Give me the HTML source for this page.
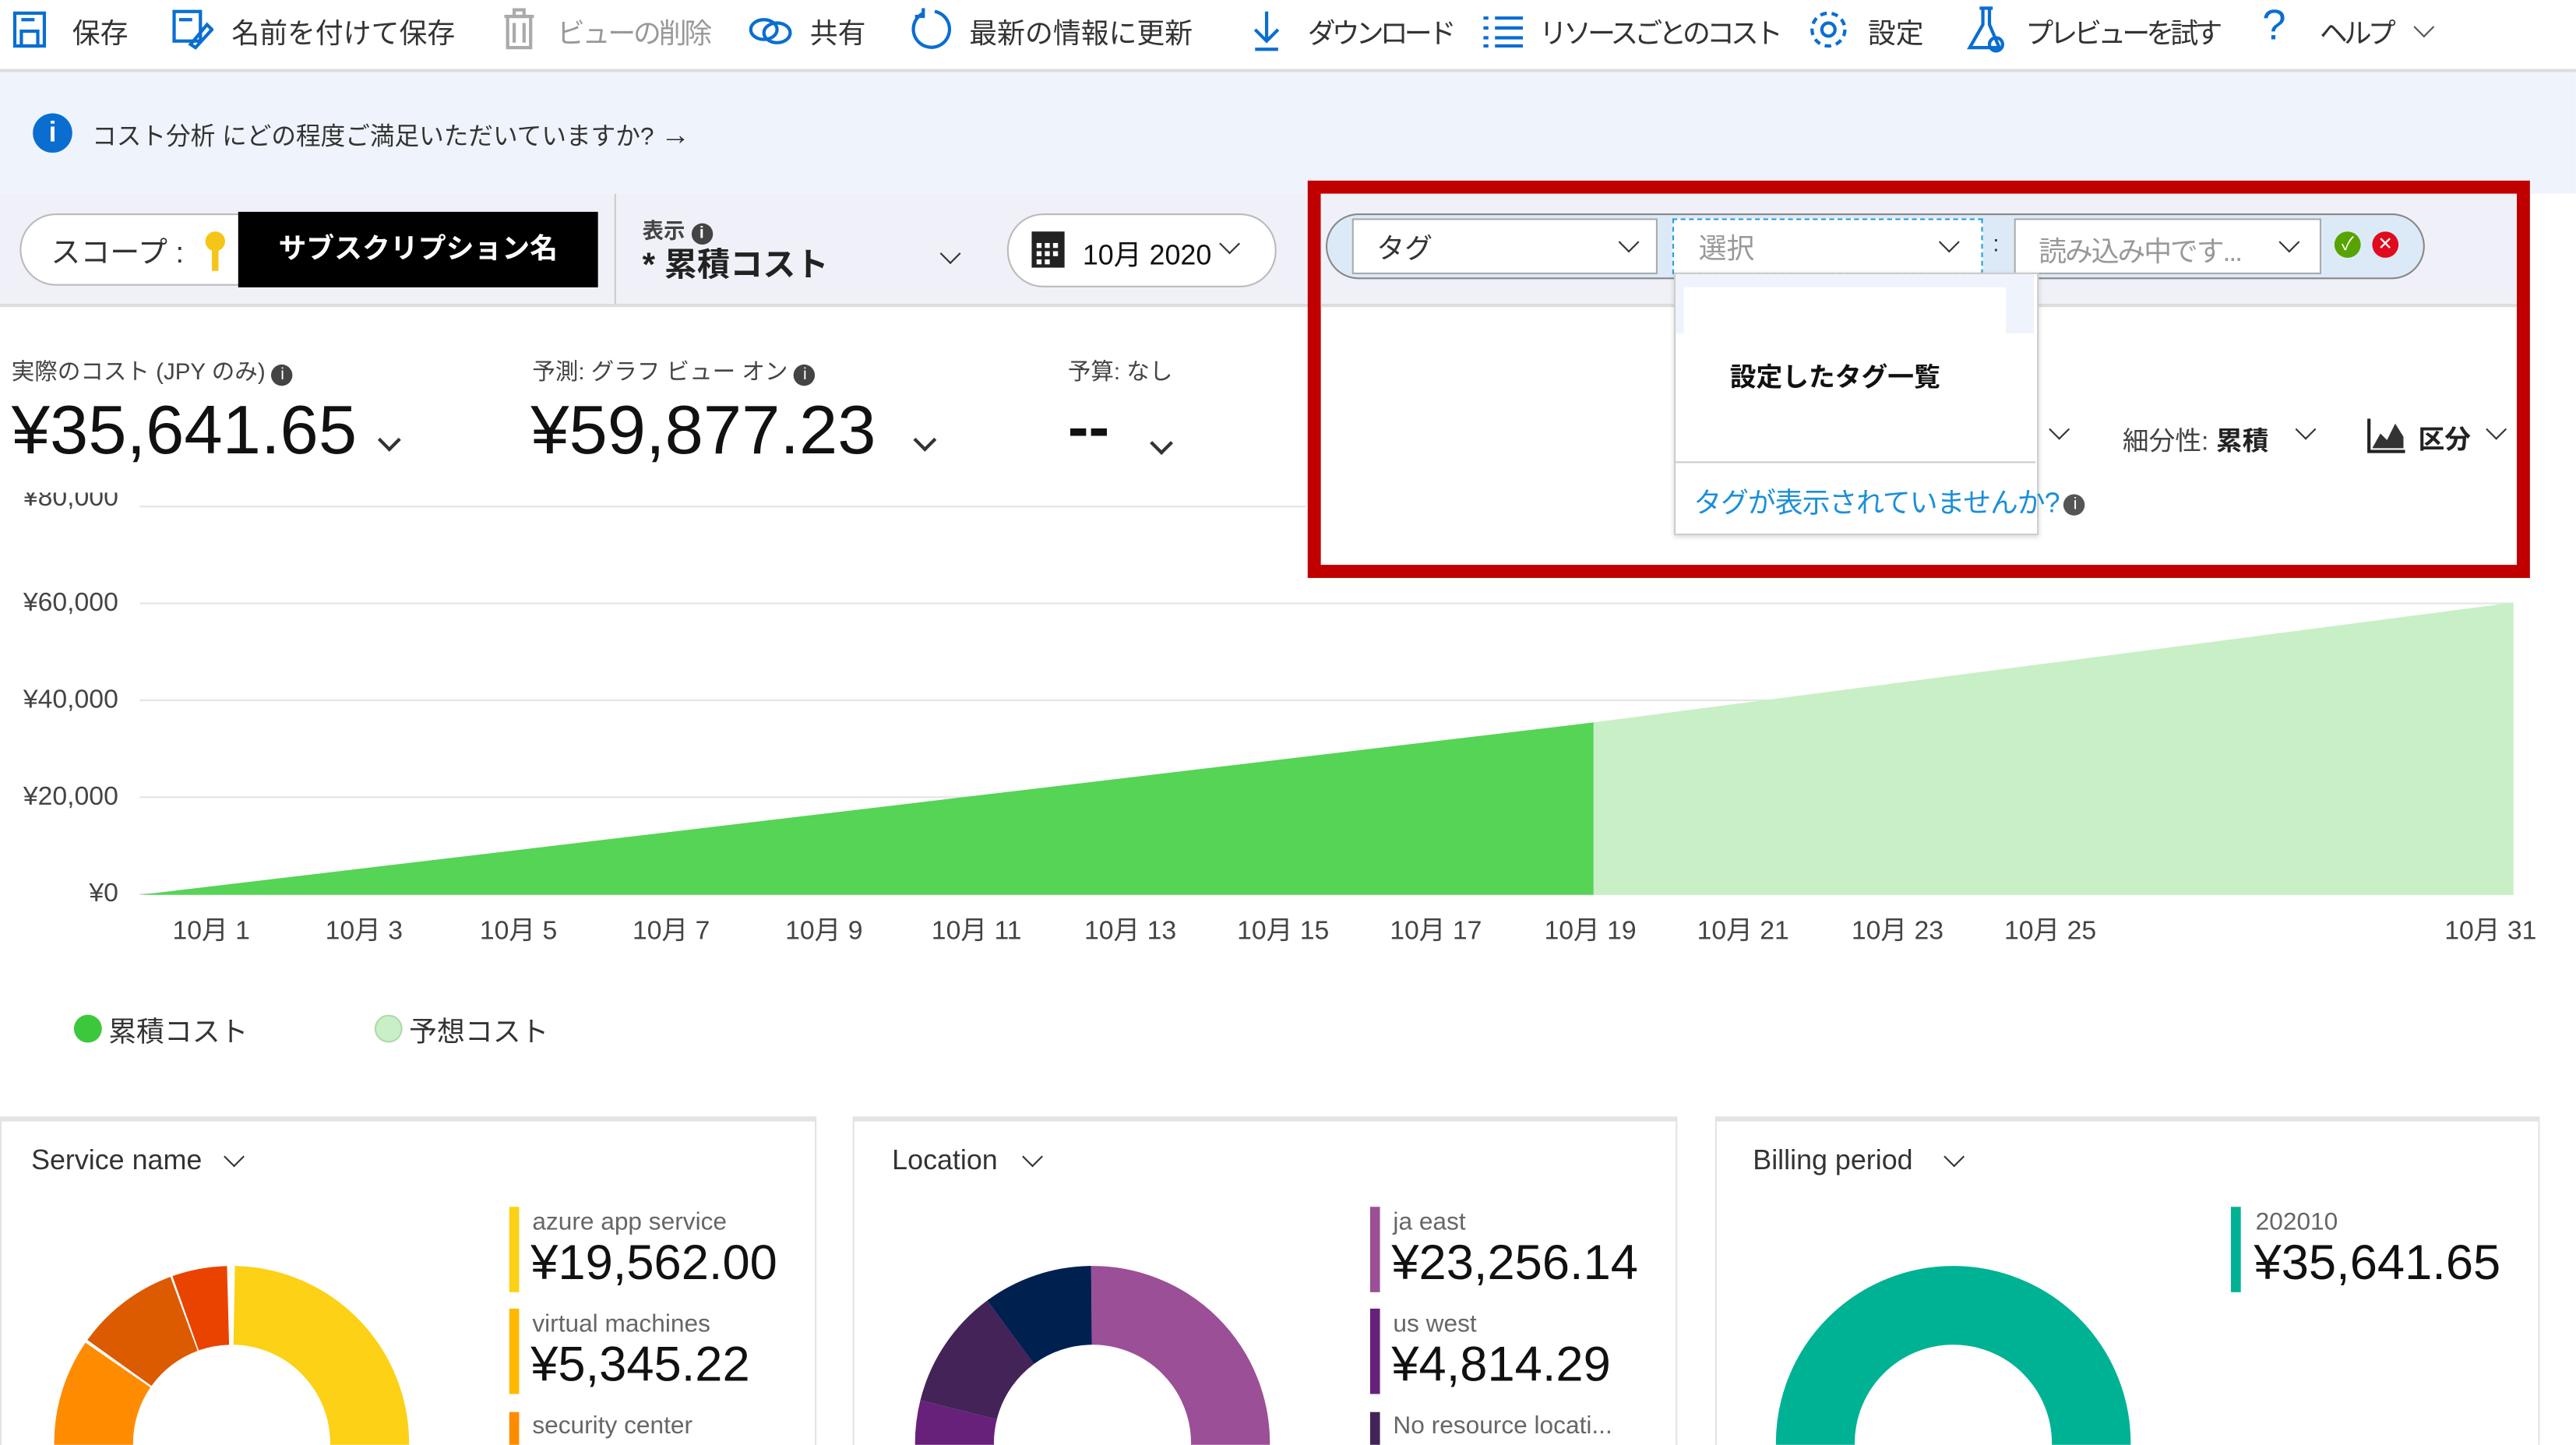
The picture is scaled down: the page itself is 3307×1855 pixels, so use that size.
<!DOCTYPE html>
<html><head><meta charset="utf-8">
<style>
html,body{margin:0;padding:0;background:#fff;overflow:hidden}
body{width:3307px;height:1855px;position:relative}
#w{position:absolute;left:0;top:0;width:1568px;height:880px;overflow:hidden;transform:scale(2.109,2.1078);transform-origin:0 0;font-family:"Liberation Sans","Noto Sans CJK JP",sans-serif;color:#222}
.a{position:absolute;white-space:nowrap}
.tb{font-size:17px;color:#333;top:6px}
.k{letter-spacing:-2.3px}
.chev{display:inline-block;width:8px;height:8px;border-right:2px solid #333;border-bottom:2px solid #333;transform:rotate(45deg)}
.yl{font-size:16px;color:#444;text-align:right;width:70px;left:2px}
.xl{font-size:16px;color:#444;top:553px}
.grid{position:absolute;left:85px;width:1445px;height:1px;background:#e4e4e4}
.card{position:absolute;top:680px;height:220px;border:1px solid #e3e3e3;border-top:3px solid #e3e3e3;background:#fff}
.lbl{font-size:15px;color:#666}
.val{font-size:30px;color:#111}
.bar{position:absolute;width:6px}
</style></head><body><div id="w">
<div class="a" style="left:0;top:0;width:1568px;height:42px;background:#fff;border-bottom:2px solid #ddd"></div>
<svg class="a" style="left:7px;top:6px" width="24" height="24" viewBox="0 0 24 24" fill="none" stroke="#0a6ed1" stroke-width="2"><rect x="2" y="2" width="18" height="20"/><rect x="6" y="13" width="10" height="9"/><line x1="6" y1="6" x2="14" y2="6"/></svg>
<div class="a tb" style="left:44px">保存</div>
<svg class="a" style="left:104px;top:5px" width="26" height="26" viewBox="0 0 26 26" fill="none" stroke="#0a6ed1" stroke-width="2"><rect x="2" y="2" width="16" height="18"/><line x1="5" y1="7" x2="13" y2="7"/><path d="M12 22 L22 10 L25 13 L15 24 Z"/></svg>
<div class="a tb" style="left:141px">名前を付けて保存</div>
<svg class="a" style="left:305px;top:5px" width="22" height="26" viewBox="0 0 22 26" fill="none" stroke="#aaa" stroke-width="2"><line x1="2" y1="5" x2="20" y2="5"/><rect x="4" y="5" width="14" height="19"/><line x1="8" y1="9" x2="8" y2="21"/><line x1="14" y1="9" x2="14" y2="21"/><rect x="8" y="1" width="6" height="4"/></svg>
<div class="a tb k" style="left:339px;color:#999;letter-spacing:-1.5px">ビューの削除</div>
<svg class="a" style="left:455px;top:9px" width="28" height="20" viewBox="0 0 28 20" fill="none" stroke="#0a6ed1" stroke-width="2"><ellipse cx="10" cy="9" rx="8" ry="6"/><ellipse cx="18" cy="11" rx="8" ry="6"/></svg>
<div class="a tb" style="left:493px">共有</div>
<svg class="a" style="left:553px;top:4px" width="26" height="28" viewBox="0 0 26 28" fill="none" stroke="#0a6ed1" stroke-width="2"><path d="M9 4 A11 11 0 1 0 16 3"/><path d="M9 1 L9 6 L4 6"/></svg>
<div class="a tb" style="left:590px">最新の情報に更新</div>
<svg class="a" style="left:762px;top:6px" width="18" height="26" viewBox="0 0 18 26" fill="none" stroke="#0a6ed1" stroke-width="2"><line x1="9" y1="1" x2="9" y2="19"/><path d="M2 12 L9 19 L16 12"/><line x1="2" y1="24" x2="16" y2="24"/></svg>
<div class="a tb k" style="left:796px">ダウンロード</div>
<svg class="a" style="left:902px;top:9px" width="26" height="20" viewBox="0 0 26 20" stroke="#0a6ed1" stroke-width="2"><line x1="8" y1="2" x2="25" y2="2"/><line x1="8" y1="8" x2="25" y2="8"/><line x1="8" y1="14" x2="25" y2="14"/><line x1="8" y1="19" x2="25" y2="19"/><line x1="1" y1="2" x2="4" y2="2"/><line x1="1" y1="8" x2="4" y2="8"/><line x1="1" y1="14" x2="4" y2="14"/><line x1="1" y1="19" x2="4" y2="19"/></svg>
<div class="a tb k" style="left:937px">リソースごとのコスト</div>
<svg class="a" style="left:1100px;top:5px" width="26" height="26" viewBox="0 0 26 26" fill="none" stroke="#0a6ed1" stroke-width="2"><circle cx="13" cy="13" r="4"/><circle cx="13" cy="13" r="10" stroke-dasharray="4 3"/></svg>
<div class="a tb" style="left:1137px">設定</div>
<svg class="a" style="left:1197px;top:3px" width="26" height="30" viewBox="0 0 26 30" fill="none" stroke="#0a6ed1" stroke-width="2"><path d="M8 2 L16 2 M10 2 L10 12 L2 26 L20 26 L14 12 L14 2"/><circle cx="18" cy="24" r="4"/></svg>
<div class="a tb k" style="left:1233px">プレビューを試す</div>
<div class="a" style="left:1377px;top:0px;font-size:26px;color:#0a6ed1">?</div>
<div class="a tb k" style="left:1412px">ヘルプ</div>
<div class="a chev" style="left:1471px;top:12px;border-color:#555;border-width:1px"></div>
<div class="a" style="left:0;top:44px;width:1568px;height:74px;background:#eff4fc"></div>
<div class="a" style="left:20px;top:69px;width:24px;height:24px;border-radius:50%;background:#0a6ed1;color:#fff;font-weight:bold;font-size:17px;text-align:center;line-height:24px">i</div>
<div class="a" style="left:56px;top:72px;font-size:15px;color:#333">コスト分析 にどの程度ご満足いただいていますか? <span style="font-size:18px">→</span></div>
<div class="a" style="left:0;top:118px;width:1540px;height:67px;background:#f0f1f8;border-bottom:2px solid #ddd"></div>
<div class="a" style="left:12px;top:130px;width:340px;height:42px;border:1px solid #bbb;border-radius:22px;background:#fff"></div>
<div class="a" style="left:31px;top:140px;font-size:18px;color:#333">スコープ :</div>
<svg class="a" style="left:124px;top:140px" width="14" height="26" viewBox="0 0 14 26"><circle cx="7" cy="7" r="6" fill="#f5c518"/><rect x="5" y="11" width="4" height="14" fill="#f5c518"/></svg>
<div class="a" style="left:145px;top:129px;width:219px;height:46px;background:#000;color:#fff;font-size:17px;font-weight:bold;line-height:46px;text-align:center">サブスクリプション名</div>
<div class="a" style="left:374px;top:118px;width:1px;height:67px;background:#ccc"></div>
<div class="a" style="left:391px;top:130px;font-size:13px;color:#444;font-weight:bold">表示 <span style="display:inline-block;width:13px;height:13px;border-radius:50%;background:#444;color:#fff;font-size:10px;text-align:center;line-height:13px">i</span></div>
<div class="a" style="left:391px;top:145px;font-size:20px;font-weight:bold;color:#222">* 累積コスト</div>
<div class="a chev" style="left:574px;top:150px;border-width:1.5px"></div>
<div class="a" style="left:613px;top:130px;width:162px;height:43px;border:1px solid #bbb;border-radius:22px;background:#fff"></div>
<svg class="a" style="left:627px;top:140px" width="22" height="24" viewBox="0 0 22 24"><rect x="1" y="1" width="20" height="22" fill="#222"/><g fill="#fff"><rect x="4" y="8" width="3" height="3"/><rect x="9" y="8" width="3" height="3"/><rect x="14" y="8" width="3" height="3"/><rect x="4" y="13" width="3" height="3"/><rect x="9" y="13" width="3" height="3"/><rect x="14" y="13" width="3" height="3"/><rect x="4" y="18" width="3" height="3"/><rect x="9" y="18" width="3" height="3"/></g></svg>
<div class="a" style="left:659px;top:141px;font-size:17px;color:#111">10月 2020</div>
<div class="a chev" style="left:744px;top:144px;border-width:1.5px"></div>
<div class="a" style="left:796px;top:110px;width:728px;height:226px;border:8px solid #c00000;background:#fff"></div>
<div class="a" style="left:804px;top:118px;width:728px;height:67px;background:#f0f1f8;border-bottom:2px solid #ddd"></div>
<div class="a" style="left:807px;top:130px;width:667px;height:38px;border:1px solid #888;border-radius:20px;background:#dceaf8"></div>
<div class="a" style="left:823px;top:133px;width:184px;height:32px;border:1px solid #aaa;background:#fff"></div>
<div class="a" style="left:838px;top:137px;font-size:17px;color:#333">タグ</div>
<div class="a chev" style="left:987px;top:143px;border-width:1.5px"></div>
<div class="a" style="left:1018px;top:133px;width:187px;height:32px;border:1px dashed #29a0d8;background:#fff"></div>
<div class="a" style="left:1034px;top:137px;font-size:17px;color:#999">選択</div>
<div class="a chev" style="left:1182px;top:143px;border-width:1.5px"></div>
<div class="a" style="left:1213px;top:140px;font-size:14px;color:#333">:</div>
<div class="a" style="left:1226px;top:133px;width:185px;height:32px;border:1px solid #aaa;background:#fff"></div>
<div class="a" style="left:1241px;top:139px;font-size:17px;color:#999;letter-spacing:-1px">読み込み中です...</div>
<div class="a chev" style="left:1389px;top:143px;border-width:1.5px"></div>
<div class="a" style="left:1421px;top:141px;width:16px;height:16px;border-radius:50%;background:#57a300;color:#fff;font-size:11px;text-align:center;line-height:16px">✓</div>
<div class="a" style="left:1444px;top:141px;width:16px;height:16px;border-radius:50%;background:#e00b1c;color:#fff;font-size:11px;text-align:center;line-height:16px">✕</div>
<div class="a" style="left:1019px;top:166px;width:220px;height:158px;border:1px solid #ccc;background:#fff;box-shadow:0 1px 3px rgba(0,0,0,.15)"></div>
<div class="a" style="left:1020px;top:167px;width:218px;height:36px;background:#eff4fc"></div>
<div class="a" style="left:1025px;top:175px;width:196px;height:28px;background:#fff"></div>
<div class="a" style="left:1053px;top:216px;font-size:16px;font-weight:bold;color:#111">設定したタグ一覧</div>
<div class="a" style="left:1019px;top:281px;width:220px;height:1px;background:#ccc"></div>
<div class="a" style="left:1031px;top:292px;font-size:17px;color:#1b8fd8;letter-spacing:-0.5px">タグが表示されていませんか?<span style="display:inline-block;width:13px;height:13px;border-radius:50%;background:#555;color:#fff;font-size:10px;text-align:center;line-height:13px;vertical-align:middle;margin-left:3px">i</span></div>
<div class="a chev" style="left:1249px;top:257px;border-width:1.5px"></div>
<div class="a" style="left:1292px;top:255px;font-size:16px;color:#444">細分性: <b style="color:#222">累積</b></div>
<div class="a chev" style="left:1399px;top:257px;border-width:1.5px"></div>
<svg class="a" style="left:1441px;top:254px" width="24" height="22" viewBox="0 0 24 22"><path d="M1 1 V21 H23" stroke="#222" stroke-width="2" fill="none"/><path d="M3 19 L8 10 L12 14 L17 4 L22 12 V19 Z" fill="#333"/></svg>
<div class="a" style="left:1472px;top:254px;font-size:16px;font-weight:bold;color:#222">区分</div>
<div class="a chev" style="left:1515px;top:257px;border-width:1.5px"></div>
<div class="a" style="left:7px;top:216px;font-size:14px;color:#444">実際のコスト (JPY のみ) <span style="display:inline-block;width:13px;height:13px;border-radius:50%;background:#444;color:#fff;font-size:10px;text-align:center;line-height:13px">i</span></div>
<div class="a" style="left:7px;top:238px;font-size:42px;color:#111">¥35,641.65</div>
<div class="a chev" style="left:232px;top:263px;border-width:2px"></div>
<div class="a" style="left:324px;top:216px;font-size:14px;color:#444">予測: グラフ ビュー オン <span style="display:inline-block;width:13px;height:13px;border-radius:50%;background:#444;color:#fff;font-size:10px;text-align:center;line-height:13px">i</span></div>
<div class="a" style="left:323px;top:238px;font-size:42px;color:#111">¥59,877.23</div>
<div class="a chev" style="left:558px;top:263px;border-width:2px"></div>
<div class="a" style="left:650px;top:216px;font-size:14px;color:#444">予算: なし</div>
<div class="a" style="left:650px;top:240px;font-size:38px;color:#111;font-weight:bold">--</div>
<div class="a chev" style="left:702px;top:265px;border-width:2px"></div>
<div class="a yl" style="top:300px;height:16px;overflow:hidden;line-height:8px">¥80,000</div>
<div class="grid" style="top:308px;width:710px"></div>
<div class="grid" style="top:367px"></div>
<div class="grid" style="top:426px"></div>
<div class="grid" style="top:485px"></div>
<div class="grid" style="top:544px"></div>
<div class="a yl" style="top:359px">¥60,000</div>
<div class="a yl" style="top:418px">¥40,000</div>
<div class="a yl" style="top:477px">¥20,000</div>
<div class="a yl" style="top:536px">¥0</div>
<svg class="a" style="left:0;top:0" width="1568" height="560"><polygon points="970,440 1530,367 1530,545 970,545" fill="#c9efc6"/><polygon points="85,545 970,440 970,545" fill="#55d455"/></svg>
<div class="a xl" style="left:105px">10月 1</div>
<div class="a xl" style="left:198px">10月 3</div>
<div class="a xl" style="left:292px">10月 5</div>
<div class="a xl" style="left:385px">10月 7</div>
<div class="a xl" style="left:478px">10月 9</div>
<div class="a xl" style="left:567px">10月 11</div>
<div class="a xl" style="left:660px">10月 13</div>
<div class="a xl" style="left:753px">10月 15</div>
<div class="a xl" style="left:846px">10月 17</div>
<div class="a xl" style="left:940px">10月 19</div>
<div class="a xl" style="left:1033px">10月 21</div>
<div class="a xl" style="left:1127px">10月 23</div>
<div class="a xl" style="left:1220px">10月 25</div>
<div class="a xl" style="left:1488px">10月 31</div>
<div class="a" style="left:45px;top:618px;width:17px;height:17px;border-radius:50%;background:#3cc83c"></div>
<div class="a" style="left:66px;top:614px;font-size:17px;color:#333">累積コスト</div>
<div class="a" style="left:228px;top:618px;width:17px;height:17px;border-radius:50%;background:#c9efc6;border:1px solid #aedaa9;box-sizing:border-box"></div>
<div class="a" style="left:249px;top:614px;font-size:17px;color:#333">予想コスト</div>
<div class="card" style="left:0;width:495px"></div>
<div class="card" style="left:519px;width:500px"></div>
<div class="card" style="left:1044px;width:500px"></div>
<div class="a" style="left:19px;top:697px;font-size:17px;color:#333">Service name</div><div class="a chev" style="left:138px;top:700px;border-width:1.5px"></div>
<div class="a" style="left:543px;top:697px;font-size:17px;color:#333">Location</div><div class="a chev" style="left:624px;top:700px;border-width:1.5px"></div>
<div class="a" style="left:1067px;top:697px;font-size:17px;color:#333">Billing period</div><div class="a chev" style="left:1185px;top:700px;border-width:1.5px"></div>
<svg class="a" style="left:0;top:680px" width="1568" height="200">
<g transform="translate(141,199) rotate(-90)" fill="none" stroke-width="48">
<circle r="84" pathLength="100" stroke="#fcd116" stroke-dasharray="55 45"/>
<circle r="84" pathLength="100" stroke="#ff8c00" stroke-dasharray="0 55 29.7 15.3"/>
<circle r="84" pathLength="100" stroke="#dc5a00" stroke-dasharray="0 85 9.5 5.5"/>
<circle r="84" pathLength="100" stroke="#ea4300" stroke-dasharray="0 94.7 5 0.3"/>
<circle r="84" pathLength="100" stroke="#fff" stroke-width="50" stroke-dasharray="0.3 99.7"/>
</g>
<g transform="translate(665,199) rotate(-90)" fill="none" stroke-width="48">
<circle r="84" pathLength="100" stroke="#9b4f96" stroke-dasharray="65 35"/>
<circle r="84" pathLength="100" stroke="#68217a" stroke-dasharray="0 65 14 21"/>
<circle r="84" pathLength="100" stroke="#442359" stroke-dasharray="0 79 11 10"/>
<circle r="84" pathLength="100" stroke="#002050" stroke-dasharray="0 90 10 0"/>
</g>
<g transform="translate(1189,199)" fill="none"><circle r="84" stroke="#00b294" stroke-width="48"/></g>
</svg>
<div class="bar" style="left:310px;top:735px;height:52px;background:#fcd116"></div>
<div class="a lbl" style="left:324px;top:736px">azure app service</div>
<div class="a val" style="left:323px;top:753px">¥19,562.00</div>
<div class="bar" style="left:310px;top:797px;height:52px;background:#ffb900"></div>
<div class="a lbl" style="left:324px;top:798px">virtual machines</div>
<div class="a val" style="left:323px;top:815px">¥5,345.22</div>
<div class="bar" style="left:310px;top:860px;height:20px;background:#ff8c00"></div>
<div class="a lbl" style="left:324px;top:860px">security center</div>
<div class="bar" style="left:834px;top:735px;height:52px;background:#9b4f96"></div>
<div class="a lbl" style="left:848px;top:736px">ja east</div>
<div class="a val" style="left:847px;top:753px">¥23,256.14</div>
<div class="bar" style="left:834px;top:797px;height:52px;background:#68217a"></div>
<div class="a lbl" style="left:848px;top:798px">us west</div>
<div class="a val" style="left:847px;top:815px">¥4,814.29</div>
<div class="bar" style="left:834px;top:860px;height:20px;background:#442359"></div>
<div class="a lbl" style="left:848px;top:860px">No resource locati...</div>
<div class="bar" style="left:1358px;top:735px;height:52px;background:#00b294"></div>
<div class="a lbl" style="left:1373px;top:736px">202010</div>
<div class="a val" style="left:1372px;top:753px">¥35,641.65</div>
</div></body></html>
